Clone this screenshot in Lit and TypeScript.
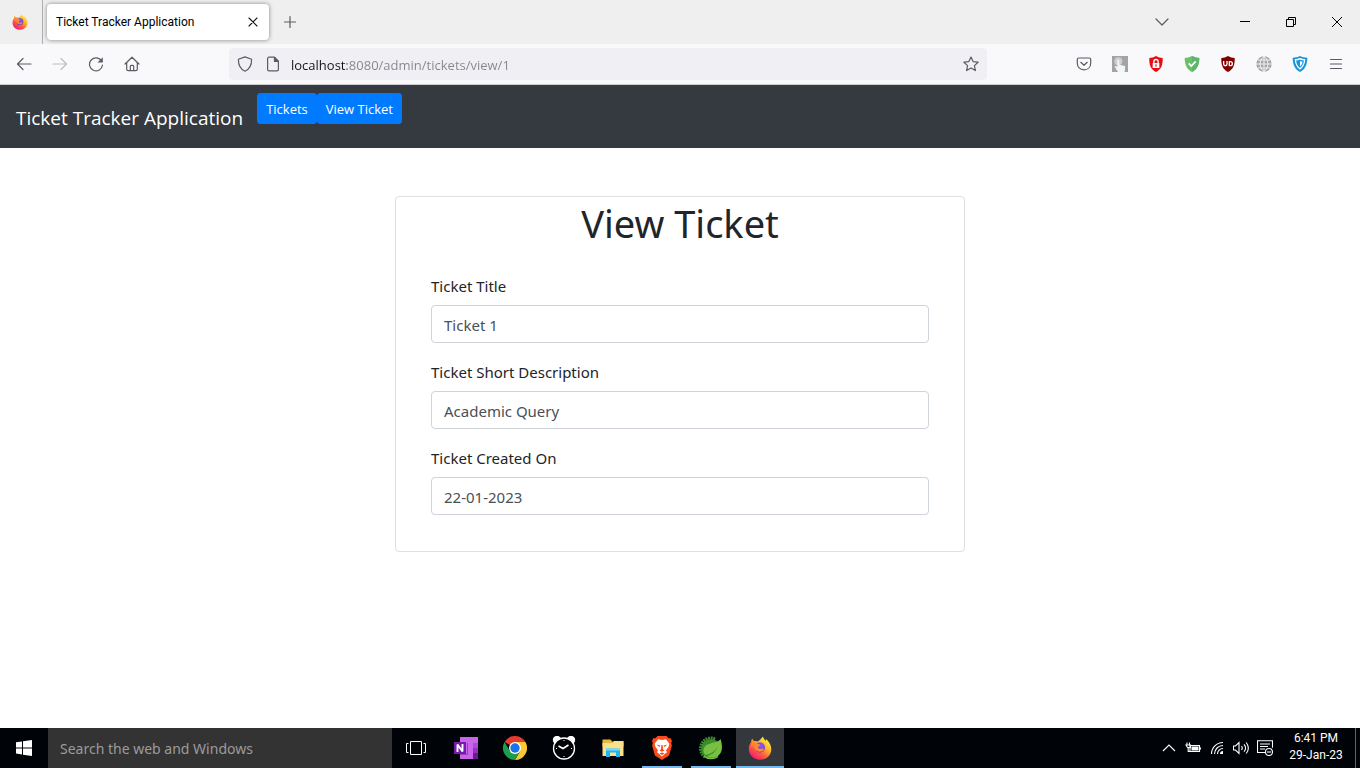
import { LitElement, html, css, svg } from "lit";
import { customElement, property } from "lit/decorators.js";
import { classMap } from "lit/directives/class-map.js";

const firefoxLogo = html`
  <svg viewBox="0 0 24 24" aria-hidden="true">
    <defs>
      <linearGradient id="ff-body" x1="0.85" y1="0.1" x2="0.2" y2="0.95">
        <stop offset="0" stop-color="#fff14a" />
        <stop offset="0.35" stop-color="#ffb12c" />
        <stop offset="0.65" stop-color="#ff5a3c" />
        <stop offset="1" stop-color="#f0197c" />
      </linearGradient>
      <radialGradient id="ff-core" cx="0.6" cy="0.35" r="0.7">
        <stop offset="0" stop-color="#9059ff" />
        <stop offset="1" stop-color="#5a35c4" />
      </radialGradient>
    </defs>
    <path
      fill="url(#ff-body)"
      d="M15 .5c.3 2 1.600 3 2.900 4.400.1-.7 0-1.300-.2-1.900 3 1.900 5.600 6 5.600 10.200 0 6-5 10.500-11.200 10.500C5.600 23.700.8 19 .8 13c0-2.800.9-5 2.300-6.700 0-1.300.3-2.500 1.100-3.700.4 1 1 1.900 1.800 2.500 1.400-.4 2.800-.2 4 .4 1.300-1 3.200-2.900 5-5z"
    />
    <circle cx="12" cy="11.500" r="5" fill="url(#ff-core)" />
    <path
      fill="#ff8a2e"
      d="M3.500 7.500C5.500 6 8.400 6.200 9.800 8c.9.200 2.300.2 2.400.8.100.9-1.700 1.600-2.400 2.300.3 1.700 2.400 2.600 4.300 1.500 1.200-.5 2.100.100 1.700.8-.8 1.700-3 2.700-5.300 2.100C7 14.700 5.800 11.500 6.300 9.500 5 9.500 4 10.500 3.500 12z"
    />
  </svg>
`;

const line = (body: unknown) => html`
  <svg class="line" viewBox="0 0 16 16" aria-hidden="true">${body}</svg>
`;
const art = (body: unknown) => html`
  <svg viewBox="0 0 24 24" aria-hidden="true">${body}</svg>
`;

const icons = {
  back: line(svg`<path d="M15 8H1.500M7 2.500 1.500 8 7 13.500" />`),
  forward: line(svg`<path d="M1 8h13.500M9 2.500 14.500 8 9 13.500" />`),
  reload: line(svg`<path d="M13.700 5.200A6.500 6.500 0 1 0 14.500 9" /><path class="solid" d="M14.800 1.200v5.300H9.500z" />`),
  home: line(svg`<path d="M1 8 8 1.200 15 8M2.700 6.800v6.500c0 .8.500 1.400 1.400 1.400h7.800c.9 0 1.400-.6 1.400-1.400V6.800M6.300 14.500v-4c0-.7.4-1.200 1-1.200h1.400c.6 0 1 .5 1 1.200v4" />`),
  shield: line(svg`<path d="M8 .9 14.600 3.300c.1 5.300-1.500 9.700-6.600 11.900C2.900 13 1.300 8.600 1.400 3.300z" />`),
  page: line(svg`<path d="M9.500 1.200H4c-.8 0-1.400.6-1.400 1.400v10.800c0 .8.600 1.400 1.400 1.400h8c.8 0 1.400-.6 1.400-1.400V5.200z" /><path class="solid" d="M8.900 1h1L13.600 5v1H8.900z" />`),
  star: line(svg`<path d="m8 1 2.100 4.600 5 .6-3.700 3.400 1 5L8 12.100l-4.400 2.500 1-5L.9 6.200l5-.6z" />`),
  chevron: line(svg`<path d="m2 5 6 6 6-6" />`),
  plus: line(svg`<path d="M8 2.500v11M2.500 8h11" />`),
  pocket: line(svg`<path d="M2.700 2h10.600c.8 0 1.400.6 1.400 1.400V7c0 4-2.700 6.900-6.700 6.900S1.300 11 1.300 7V3.400C1.300 2.600 1.900 2 2.700 2zM4.800 6.300 8 9.300l3.200-3" />`),
  menu: line(svg`<path d="M2.500 3.500h11M2.500 8h11M2.500 12.500h11" />`),
};

const extensions = [
  { name: "Click helper", icon: art(svg`<path fill="#a3a3a3" d="M0 0h24v24H0z" /><circle cx="9.500" cy="8" r="6" fill="#cfcfcf" /><path fill="#eef5fb" d="M8 7c0-2 3-2 3 0v6l7 1.500c1.500.4 2 1 1.800 2.500L19 24H9l-4.500-7c-1-2 1-3 3.500-.5z" />`) },
  { name: "Privacy lock", icon: art(svg`<path fill="#e80b10" d="M12 0c3 2 6.500 3 10 3 .5 10-2 17-10 21C4 20 1.500 13 2 3c3.500 0 7-1 10-3z" /><path fill="none" stroke="#fff" stroke-width="2" d="M8.800 11V8.500a3.200 3.200 0 0 1 6.400 0V11" /><path fill="#fff" d="M7 10.500h10V18H7z" /><path fill="#e80b10" d="M11.200 12.500h1.600v3.500h-1.600z" />`) },
  { name: "Safety check", icon: art(svg`<path fill="#6abf69" d="M12 0c4 2 7.500 3 11 3-.2 10-3 17-11 21C4 20 1.200 13 1 3c3.500 0 7-1 11-3z" /><path fill="#5fb56d" d="M12 0c4 2 7.500 3 11 3-.2 10-3 17-11 21z" /><path fill="none" stroke="#fff" stroke-width="2.500" d="m7 11 4 4 6.500-7" />`) },
  { name: "uBlock Origin", icon: art(svg`<path fill="#800000" d="M12 0c3 2 6.500 3 10 3 .5 10-2 17-10 21C4 20 1.500 13 2 3c3.500 0 7-1 10-3z" /><path fill="none" stroke="#fff" stroke-width="2" d="M5.500 7.500V12c0 3.500 5 3.500 5 0V7.500M14 8v6.500h1.500c4 0 4-6 0-6H14" />`) },
  { name: "Translate", icon: art(svg`<circle cx="12" cy="12" r="11.500" fill="#a5a5a5" /><path fill="none" stroke="#f3f3f3" stroke-width="1.500" d="M12 0v24M0 12h24M2.500 6h19M2.500 18h19M12 .5c-8 7-8 16 0 23M12 .5c8 7 8 16 0 23" />`) },
  { name: "Traffic shield", icon: art(svg`<path fill="#1696d8" d="M12 0c3.500 1.500 7 2.500 11 2.500C23 13 19.500 20 12 24 4.500 20 1 13 1 2.500c4 0 7.500-1 11-2.500z" /><path fill="#fff" d="M12 3c2.500 1 5 1.700 8 1.900-.4 7-3 12.200-8 15.900-5-3.700-7.600-8.900-8-15.900C7 4.700 9.500 4 12 3z" /><path fill="#1696d8" d="M12 5.300c2 .8 3.700 1.300 5.900 1.500-.5 5-2.300 8.600-5.900 11.300-3.600-2.700-5.400-6.300-5.900-11.300 2.200-.2 3.900-.7 5.900-1.500z" /><path fill="#fff" d="M12 7.500c1.200.5 2.300.8 3.700 1-.4 3-1.500 5.400-3.700 7.300z" />`) },
];

const teeth = Array.from({ length: 12 }, (_, i) => {
  const a = Math.PI * (0.72 + i * 0.08);
  const x = Math.cos(a);
  const y = Math.sin(a);
  return svg`<path stroke="#3c8c2c" stroke-width="2" d=${`M${12 + 9 * x} ${12.5 + 9 * y}L${12 + 12 * x} ${12.5 + 12 * y}`} />`;
});

const taskApps = [
  { name: "OneNote", state: "idle", icon: art(svg`<path fill="#ca64ea" d="M6 1h18v22H6z" /><path fill="#ae4bd5" d="M19 7h5v5h-5z" /><path fill="#9332bf" d="M19 12h5v5h-5z" /><path fill="#6b1c94" d="M19 17h5v6h-5z" /><path fill="#983fc2" d="M6 18h8v1H6zM13 7h1v11h-1z" /><path fill="#7719aa" d="M0 6h12v12H0z" /><path fill="none" stroke="#fff" stroke-width="1.900" stroke-linejoin="bevel" d="M3.500 16V8.500L8.500 15.500V8" />`) },
  { name: "Chrome", state: "idle", icon: art(svg`<path fill="#e33b2e" d="M12 12 1.600 6A12 12 0 0 1 22.400 6z" /><path fill="#fcc934" d="M12 12V6h10.400A12 12 0 0 1 12 24l5.200-9z" /><path fill="#1e9e4c" d="M12 12 6.800 15 1.600 6A12 12 0 0 0 12 24l5.200-9z" /><circle cx="12" cy="12" r="6" fill="#fff" /><circle cx="12" cy="12" r="4.700" fill="#1a73e8" />`) },
  { name: "Alarms", state: "idle", icon: art(svg`<g fill="#fff"><circle cx="5" cy="4" r="4.200" /><circle cx="19" cy="4" r="4.200" /></g><circle cx="12" cy="12.500" r="10.500" fill="#000308" stroke="#fff" stroke-width="1.300" /><path fill="none" stroke="#fff" stroke-width="1.600" d="m6.500 10 4.500 2.500L16.500 9" /><path stroke="#fff" stroke-width="1" d="M12 4v1M12 20v1M4 12.500h1M19 12.500h1" />`) },
  { name: "File Explorer", state: "idle", icon: art(svg`<path fill="#e8b93f" d="M1.500 3.500h8l1.500 2h11.500v5h-21z" /><path fill="#fbe08a" d="M1.500 7h10l1.500-2h9.500v15h-21z" /><path fill="#23b3f2" d="M5 12.500h14V21h-4v-4.500H9V21H5z" /><path fill="#7fd9fb" d="M5 12.500h14v2H5z" />`) },
  { name: "Brave", state: "open", icon: art(svg`<path fill="#fb4a1c" d="m7.500 0h9l2 2.300 2-.3L22 5l-.8 2 .7 2.500-2.800 10L12 24l-7.100-4.500-2.800-10L2.800 7 2 5l1.500-3 2 .3z" /><path fill="#fff" d="m12 4 4-.8 3.300 4.500-.7 3-2.600 3.600 1 2-2 1.400L12 20.500l-3-2.800-2-1.400 1-2-2.600-3.600-.7-3L8 3.200z" /><path fill="#fb4a1c" d="m6.500 8.500 4 1-1 1.500zM17.500 8.500l-4 1 1 1.500zM11.400 9h1.200l.5 4.500 1.500 1-2.600 1.300-2.600-1.300 1.500-1zM9.500 17.500l2.500-1 2.500 1-2.500 1.500z" />`) },
  { name: "Spring Tools", state: "open", icon: art(svg`${teeth}<circle cx="12" cy="12.800" r="9.800" fill="#3c8c2c" /><path fill="#77c043" d="M21.500 3C19 8 5 5.500 4.500 14.500c0 2 .8 3.500 2 4.500C12 18 16.500 15 19 10c-2 6-6.500 9-11 10 2 1.500 5 1.800 7.500 1.200C23 19.500 24.500 12 21.500 3z" /><path fill="none" stroke="#77c043" stroke-width="1.200" d="M5 20c3.500 3.500 10 3.500 14 .5" />`) },
  { name: "Firefox", state: "active", icon: firefoxLogo },
];

const taskView = art(svg`<path fill="none" stroke="#fff" stroke-width="1" d="M6.500 5.500h11v13h-11zM4.500 7.500h-2v9h2M19.500 7.500h2v9h-2" />`);

const trayItems = [
  { name: "Show hidden icons", icon: line(svg`<path d="m2 11 6-6 6 6" />`) },
  { name: "Battery", icon: line(svg`<path d="M5 5.500h9.500v6H5zM15.500 7.500v2M2 2.500v2M4.500 2.500v2M1 5h4.500v2.500h-3zM3.200 8v3.500H5" /><path class="solid" d="M6.500 6.500h7v4h-7z" />`) },
  { name: "Network", icon: line(svg`<path d="M2.500 14A11.500 11.500 0 0 1 14 2.500M5.500 14A8.500 8.500 0 0 1 14 5.500M8.500 14A5.500 5.500 0 0 1 14 8.500" /><path class="solid" d="M11 14a3 3 0 0 1 3-3v3z" />`) },
  { name: "Volume", icon: line(svg`<path d="M.5 6h2l3.500-3.500v11L2.500 10h-2zM8.500 6c1 1.300 1 2.700 0 4M11 4.300c2 2.300 2 5.100 0 7.400M13.200 2.500c2.600 3.300 2.600 7.700 0 11" />`) },
  { name: "Notifications", icon: line(svg`<path d="M9 12.500H.5V.8h15v7M3 4h10M3 6.500h8M3 9h5" /><circle cx="12" cy="12" r="3.500" /><path d="M10 12h4" />`) },
];

@customElement("browser-chrome")
class BrowserChrome extends LitElement {
  @property() tabTitle = "";
  @property() address = "";

  static styles = css`
    :host { display: block; font-family: Roboto, "Noto Sans", sans-serif; color: #15141a; }
    button { display: flex; align-items: center; justify-content: center; padding: 0; border: 0; background: none; color: #5b5b66; flex: none; }
    svg { display: block; width: 16px; height: 16px; }
    .line { fill: none; stroke: currentColor; stroke-width: 1.2; stroke-linejoin: round; stroke-linecap: round; }
    .solid { fill: currentColor; stroke: none; }
    .strip { display: flex; align-items: center; height: 44px; background: #efefef; }
    .pinned { width: 43px; height: 44px; padding-right: 2px; border-right: 1px solid #aeaeb2; box-sizing: border-box; }
    .tab { display: flex; align-items: center; justify-content: space-between; width: 222px; height: 36px; margin-left: 4px; padding: 0 8px 0 9px; box-sizing: border-box; background: #fff; border-radius: 4px; box-shadow: 0 0 4px rgba(0, 0, 0, 0.45); font-size: 12px; line-height: 16px; color: #000; }
    .tab .close { width: 16px; height: 16px; color: #15141a; }
    .tab .close svg { width: 10px; height: 10px; stroke-width: 1.1; }
    .add { width: 42px; height: 36px; }
    .list { width: 36px; height: 36px; margin-left: auto; margin-right: 42px; }
    .win { width: 46px; height: 36px; color: #000; }
    .win svg { width: 12px; height: 12px; }
    .sharp { fill: none; stroke: currentColor; stroke-width: 1; }
    .bar { display: flex; align-items: center; height: 40px; padding: 0 6px; background: #f9f9fb; border-bottom: 1px solid #ccccd0; }
    .tool { width: 36px; height: 32px; }
    .tool:disabled { color: #bfbfc5; }
    .field { display: flex; align-items: center; flex: 1; min-width: 0; height: 32px; margin: 0 79px; padding: 0 8px; gap: 12px; box-sizing: border-box; background: #f0f0f4; border-radius: 4px; }
    .field input { flex: 1; min-width: 0; height: 24px; box-sizing: border-box; margin-left: -2px; padding: 1px 0 0; border: 0; outline: 0; font: 13px/23px "Open Sans", "Noto Sans", sans-serif; color: transparent; background: linear-gradient(90deg, #15141a 56px, #84848c 56px); -webkit-background-clip: text; background-clip: text; }
  `;

  render() {
    return html`
      <div class="strip">
        <button class="pinned" aria-label="Firefox View">${firefoxLogo}</button>
        <div class="tab">
          <span>${this.tabTitle}</span>
          <button class="close" aria-label="Close tab">
            <svg class="line" viewBox="0 0 10 10"><path d="m1 1 8 8M9 1 1 9" /></svg>
          </button>
        </div>
        <button class="add" aria-label="New tab">${icons.plus}</button>
        <button class="list" aria-label="List all tabs">${icons.chevron}</button>
        <button class="win" aria-label="Minimize"><svg class="sharp" viewBox="0 0 12 12"><path d="M1 5.500h10" /></svg></button>
        <button class="win" aria-label="Restore"><svg class="sharp" viewBox="0 0 12 12"><path d="M1.500 3.500h7v7h-7zM3.500 3V1.500h7v7H9" /></svg></button>
        <button class="win" aria-label="Close"><svg class="sharp" viewBox="0 0 12 12"><path d="m1 1 10 10M11 1 1 11" /></svg></button>
      </div>
      <div class="bar">
        <button class="tool" aria-label="Back">${icons.back}</button>
        <button class="tool" aria-label="Forward" disabled>${icons.forward}</button>
        <button class="tool" aria-label="Reload">${icons.reload}</button>
        <button class="tool" aria-label="Home">${icons.home}</button>
        <div class="field">
          <button aria-label="Tracking protection">${icons.shield}</button>
          <button aria-label="Site information">${icons.page}</button>
          <input aria-label="Address" .value=${this.address} />
          <button aria-label="Bookmark this page">${icons.star}</button>
        </div>
        <button class="tool" aria-label="Save to Pocket">${icons.pocket}</button>
        ${extensions.map((e) => html`<button class="tool" aria-label=${e.name}>${e.icon}</button>`)}
        <button class="tool" aria-label="Menu">${icons.menu}</button>
      </div>
    `;
  }
}

@customElement("ticket-page")
class TicketPage extends LitElement {
  private fields = [
    { id: "title", label: "Ticket Title", value: "Ticket 1" },
    { id: "description", label: "Ticket Short Description", value: "Academic Query" },
    { id: "created", label: "Ticket Created On", value: "22-01-2023" },
  ];

  static styles = css`
    :host { display: block; background: #fff; color: #212529; font-family: "Noto Sans", "Open Sans", sans-serif; font-size: 15px; line-height: 24px; }
    nav { display: flex; align-items: flex-start; gap: 14px; min-height: 47px; padding: 8px 16px; background: #343a40; font-family: "Open Sans", "Noto Sans", sans-serif; }
    a { color: #fff; text-decoration: none; }
    .brand { padding: 10px 0 7px; font-size: 19px; line-height: 30px; }
    .links { display: flex; }
    .btn { padding: 5px 8px 3px; border: 1px solid #007bff; border-radius: 3px; background: #007bff; font-size: 13px; line-height: 21px; }
    .card { width: 570px; max-width: 100%; margin: 48px auto; box-sizing: border-box; border: 1px solid #dfdfdf; border-radius: 4px; }
    h1 { margin: 0 0 6px; padding-top: 2px; font-size: 38px; line-height: 48px; font-weight: 400; text-align: center; }
    form { padding: 20px 35px; }
    .group { margin-bottom: 16px; }
    label { display: block; padding-top: 1px; margin-bottom: 7px; }
    input { display: block; width: 100%; height: 38px; box-sizing: border-box; padding: 7px 12px 5px; border: 1px solid #ced4da; border-radius: 4px; background: #fff; color: #495057; font: inherit; }
  `;

  render() {
    return html`
      <nav>
        <a class="brand" href="#">Ticket Tracker Application</a>
        <div class="links">
          <a class="btn" href="#tickets">Tickets</a>
          <a class="btn" href="#view">View Ticket</a>
        </div>
      </nav>
      <main class="card">
        <h1>View Ticket</h1>
        <form>
          ${this.fields.map(
            (f) => html`
              <div class="group">
                <label for=${f.id}>${f.label}</label>
                <input id=${f.id} type="text" .value=${f.value} />
              </div>
            `
          )}
        </form>
      </main>
    `;
  }
}

@customElement("task-bar")
class TaskBar extends LitElement {
  static styles = css`
    :host { display: flex; height: 40px; background: #000308; color: #fff; font-family: Roboto, "Noto Sans", sans-serif; }
    button { display: flex; align-items: center; justify-content: center; padding: 0; border: 0; background: none; color: #fff; flex: none; }
    svg { display: block; width: 24px; height: 24px; }
    .line { width: 16px; height: 16px; fill: none; stroke: currentColor; stroke-width: 1.1; }
    .solid { fill: currentColor; stroke: none; }
    .start { width: 48px; }
    .start svg { width: 16px; height: 16px; }
    .search { width: 344px; min-width: 0; box-sizing: border-box; padding: 1px 12px 0; border: 0; outline: 0; background: #333; color: #fff; font: 14px/20px "Noto Sans", "Open Sans", sans-serif; }
    .search::placeholder { color: #9b9b9b; opacity: 1; }
    .view { width: 48px; }
    .apps { display: flex; gap: 1px; margin-left: 2px; }
    .app { width: 48px; box-sizing: border-box; border-top: 2px solid transparent; border-bottom: 2px solid transparent; }
    .open { width: 40px; margin: 0 4px; border-bottom-color: #76b9ed; }
    .active { background: #34373b; border-top-color: #34373b; border-bottom-color: #76b9ed; }
    .tray { display: flex; margin-left: auto; }
    .tray button { width: 24px; }
    .clock { display: flex; flex-direction: column; justify-content: center; width: 78px; padding-bottom: 2px; box-sizing: border-box; font-size: 12px; line-height: 17px; text-align: center; }
    .desktop { width: 4px; border-left: 1px solid #666; }
  `;

  render() {
    return html`
      <button class="start" aria-label="Start">
        <svg viewBox="0 0 16 16" fill="#fff"><path d="M0 2.200 6 1.400v6H0zM7 1.200 16 0v7.400H7zM0 8.400h6v6l-6-.8zM7 8.400h9V16l-9-1.200z" /></svg>
      </button>
      <input class="search" aria-label="Search" placeholder="Search the web and Windows" />
      <button class="view" aria-label="Task View">${taskView}</button>
      <div class="apps">
        ${taskApps.map(
          (a) => html`<button
            class=${classMap({ app: true, open: a.state === "open", active: a.state === "active" })}
            aria-label=${a.name}
          >${a.icon}</button>`
        )}
      </div>
      <div class="tray">
        ${trayItems.map((t) => html`<button aria-label=${t.name}>${t.icon}</button>`)}
        <div class="clock"><span>6:41 PM</span><span>29-Jan-23</span></div>
        <div class="desktop"></div>
      </div>
    `;
  }
}

@customElement("app-root")
class AppRoot extends LitElement {
  static styles = css`
    :host { display: flex; flex-direction: column; min-height: 100vh; background: #fff; }
    ticket-page { flex: 1; }
  `;

  render() {
    return html`
      <browser-chrome
        tabTitle="Ticket Tracker Application"
        address="localhost:8080/admin/tickets/view/1"
      ></browser-chrome>
      <ticket-page></ticket-page>
      <task-bar></task-bar>
    `;
  }
}
